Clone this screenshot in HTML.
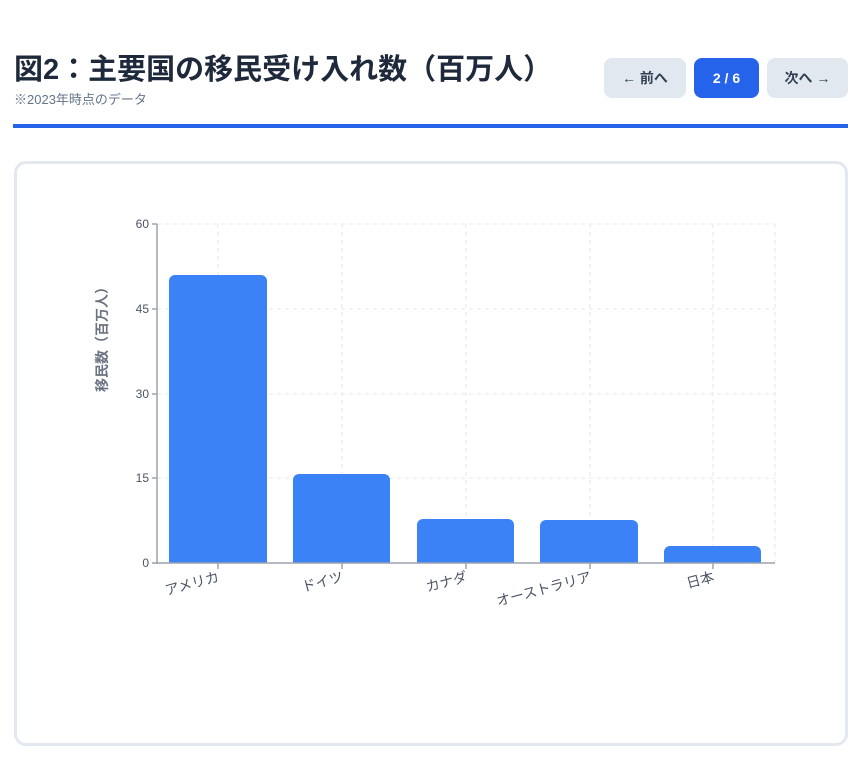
<!DOCTYPE html>
<html><head><meta charset="utf-8"><style>
body{margin:0;background:#fff;width:860px;height:759px;overflow:hidden;font-family:"Liberation Sans","Noto Sans CJK JP",sans-serif;}
h1{position:absolute;left:14px;top:46px;margin:0;font-size:29px;font-weight:700;color:#1e293b;letter-spacing:0px;}
.sub{position:absolute;left:14px;top:89px;font-size:13px;color:#64748b;}
.btn{position:absolute;top:58px;height:40px;border-radius:8px;background:#e2e8f0;color:#334155;font-size:14px;font-weight:700;display:flex;align-items:center;justify-content:center;}
.line{position:absolute;left:13px;top:124px;width:835px;height:4px;background:#2563eb;}
.card{position:absolute;left:14px;top:161px;width:828px;height:579px;border:3px solid #e2e8f0;border-radius:12px;}
</style></head><body>
<h1>図2：主要国の移民受け入れ数（百万人）</h1>
<div class="sub">※2023年時点のデータ</div>
<div class="btn" style="left:604px;width:82px">← 前へ</div>
<div class="btn" style="left:694px;width:65px;background:#2563eb;color:#fff">2 / 6</div>
<div class="btn" style="left:767px;width:81px">次へ →</div>
<div class="line"></div>
<div class="card"></div>
<svg style="position:absolute;left:0;top:0" width="860" height="759" font-family="Liberation Sans, Noto Sans CJK JP, sans-serif">
<g stroke="#e5e7eb" stroke-dasharray="4,4" stroke-width="1">
<line x1="157" y1="224" x2="775" y2="224"/><line x1="157" y1="309" x2="775" y2="309"/><line x1="157" y1="394" x2="775" y2="394"/><line x1="157" y1="478" x2="775" y2="478"/>
<line x1="218" y1="224" x2="218" y2="563"/><line x1="342" y1="224" x2="342" y2="563"/><line x1="466" y1="224" x2="466" y2="563"/><line x1="590" y1="224" x2="590" y2="563"/><line x1="713" y1="224" x2="713" y2="563"/><line x1="775" y1="224" x2="775" y2="563"/>
</g>
<g fill="#3b82f6">
<path d="M169 563V281a6 6 0 0 1 6-6h86a6 6 0 0 1 6 6V563z"/>
<path d="M293 563V480a6 6 0 0 1 6-6h85a6 6 0 0 1 6 6V563z"/>
<path d="M417 563V525a6 6 0 0 1 6-6h85a6 6 0 0 1 6 6V563z"/>
<path d="M540 563V526a6 6 0 0 1 6-6h86a6 6 0 0 1 6 6V563z"/>
<path d="M664 563V552a6 6 0 0 1 6-6h85a6 6 0 0 1 6 6V563z"/>
</g>
<g stroke="#9ca3af" stroke-width="1.5">
<line x1="157" y1="224" x2="157" y2="564"/><line x1="157" y1="563" x2="775" y2="563"/>
<line x1="152" y1="224" x2="157" y2="224"/><line x1="152" y1="309" x2="157" y2="309"/><line x1="152" y1="394" x2="157" y2="394"/><line x1="152" y1="478" x2="157" y2="478"/><line x1="152" y1="563" x2="157" y2="563"/>
<line x1="218" y1="563" x2="218" y2="569"/><line x1="342" y1="563" x2="342" y2="569"/><line x1="466" y1="563" x2="466" y2="569"/><line x1="590" y1="563" x2="590" y2="569"/><line x1="713" y1="563" x2="713" y2="569"/>
</g>
<g fill="#4b5563" font-size="12" text-anchor="end">
<text x="149" y="228">60</text><text x="149" y="313">45</text><text x="149" y="398">30</text><text x="149" y="482">15</text><text x="149" y="567">0</text>
</g>
<g fill="#4b5563" font-size="14" text-anchor="end">
<text transform="translate(220,581) rotate(-15)">アメリカ</text>
<text transform="translate(344,581) rotate(-15)">ドイツ</text>
<text transform="translate(468,581) rotate(-15)">カナダ</text>
<text transform="translate(592,581) rotate(-15)">オーストラリア</text>
<text transform="translate(715,581) rotate(-15)">日本</text>
</g>
<text transform="translate(107,336) rotate(-90)" text-anchor="middle" fill="#6b7280" font-size="14" font-weight="700">移民数（百万人）</text>
</svg>
</body></html>
